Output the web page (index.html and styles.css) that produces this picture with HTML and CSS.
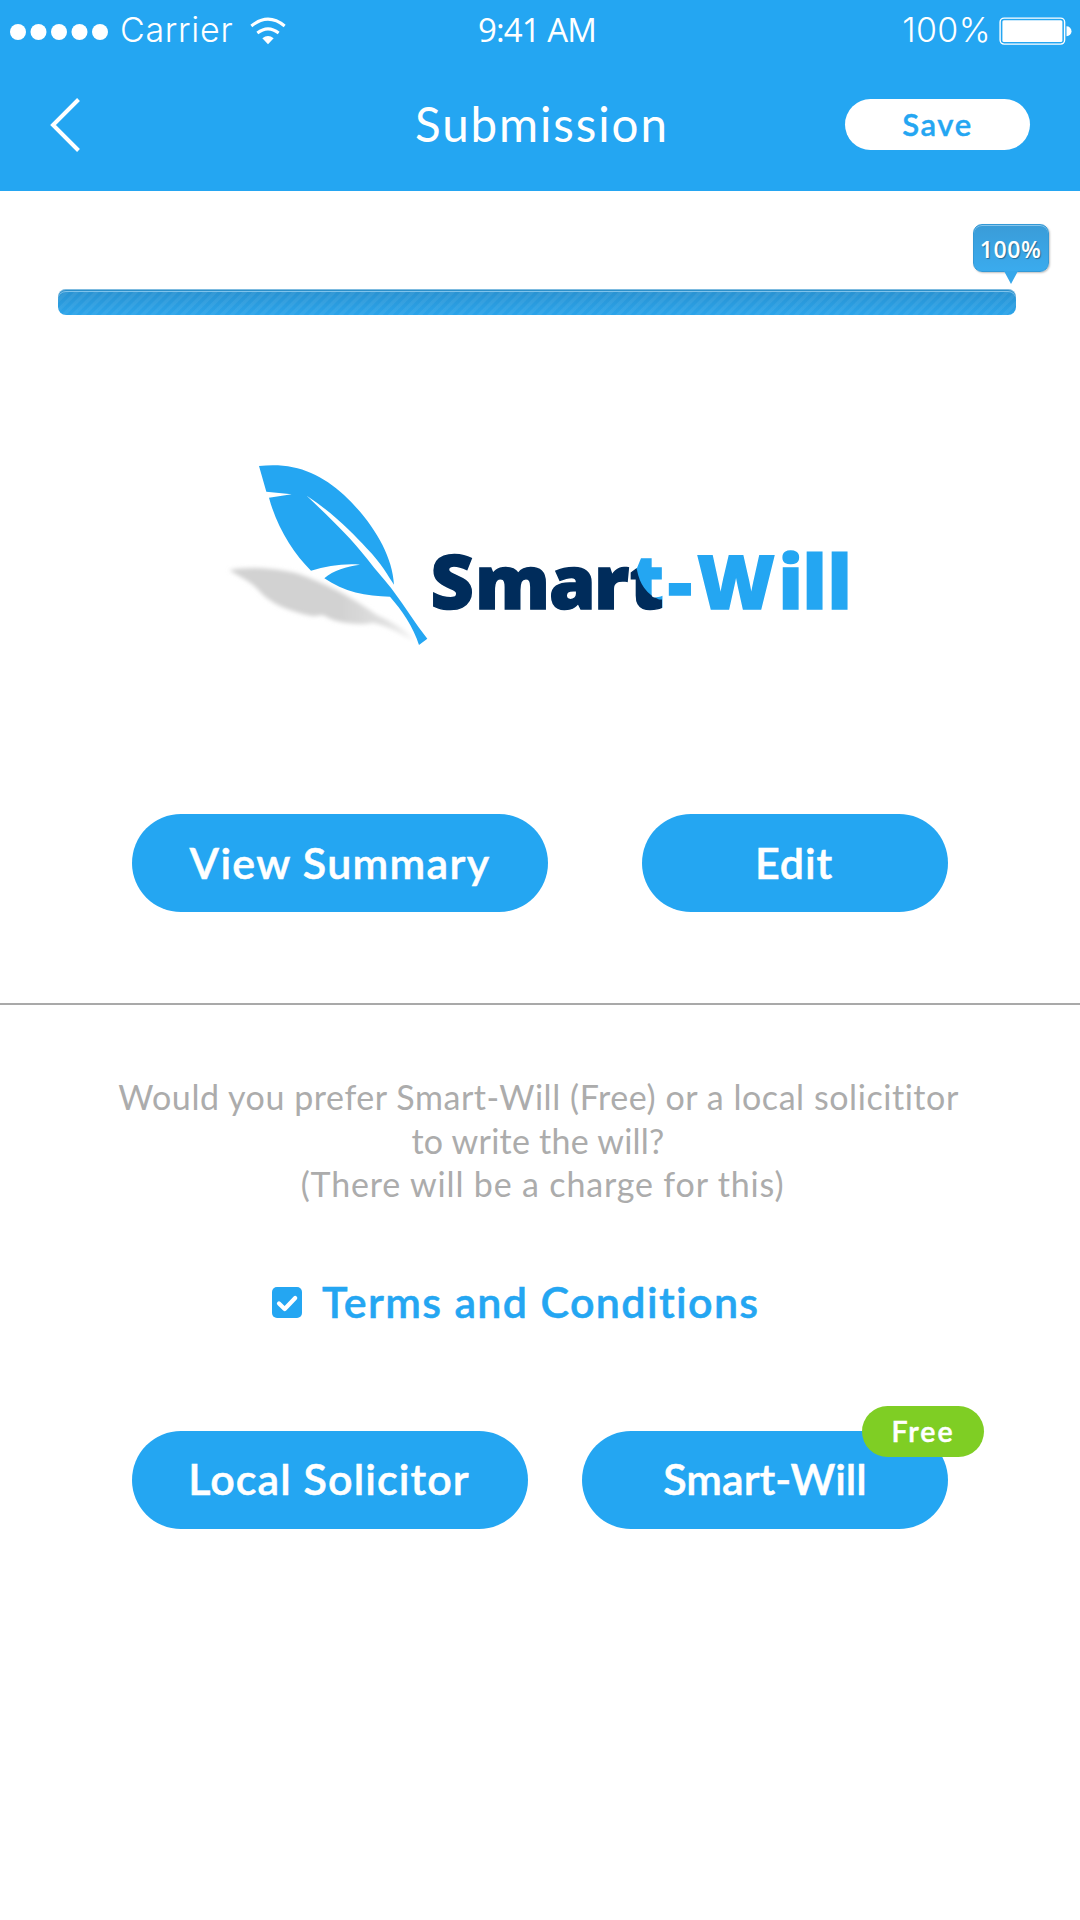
FILE: index.html
```html
<!DOCTYPE html>
<html lang="en">
<head>
<meta charset="utf-8">
<title>Submission</title>
<link rel="stylesheet" href="styles.css">
</head>
<body>
<header class="header">
  <div class="status">
    <div class="status-left">
      <svg class="signal" width="98" height="16" viewBox="0 0 98 16" fill="#fff"><circle cx="8" cy="8" r="8"/><circle cx="28.5" cy="8" r="8"/><circle cx="49" cy="8" r="8"/><circle cx="69.5" cy="8" r="8"/><circle cx="90" cy="8" r="8"/></svg>
      <span class="carrier">Carrier</span>
      <svg class="wifi" width="36" height="28" viewBox="750 48 108 84" fill="none" stroke="#fff" stroke-width="9"><path d="M754 75Q804 34 854 75M772 96Q804 71 836 96"/><path d="M787 112Q804 98 821 112L804 129.500z" fill="#fff" stroke="none"/></svg>
    </div>
    <span class="time">9:41 AM</span>
    <div class="status-right">
      <span class="battery-label">100%</span>
      <svg class="battery" width="73" height="29" viewBox="0 0 73 29"><rect x="1.100" y="1.100" width="64.500" height="26" rx="4" fill="none" stroke="#fff" stroke-width="1.400"/><rect x="3.400" y="3.300" width="60" height="21.800" rx="1.500" fill="#fff"/><path d="M67.500 9.200a5 5 0 0 1 0 10z" fill="#fff"/></svg>
    </div>
  </div>
  <nav class="nav">
    <svg class="back" width="32" height="56" viewBox="0 0 32 56" fill="none" stroke="#fff" stroke-width="4"><path d="M28.500 2.500L3 28l25.500 25.500"/></svg>
    <h1 class="title">Submission</h1>
    <button class="save">Save</button>
  </nav>
</header>
<main>
  <section class="progress">
    <div class="track"><div class="bubble">100%<svg class="tip" width="14" height="13" viewBox="0 0 14 13"><path d="M0 0h14L7 13z" fill="#36a7ea"/></svg></div></div>
  </section>
  <section class="brand">
    <svg width="660" height="220" viewBox="210 440 660 220">
      <defs>
        <filter id="soft" x="-10%" y="-20%" width="120%" height="140%"><feGaussianBlur stdDeviation="7"/></filter>
        <linearGradient id="fade"><stop offset=".6" stop-color="#d2d2d2"/><stop offset=".85" stop-color="#e0e0e0"/><stop offset="1" stop-color="#f4f4f4"/></linearGradient>
        <pattern id="ink" patternUnits="userSpaceOnUse" x="410" y="520" width="460" height="140">
          <path d="M0 0h460v140H0z" fill="#24a6f2"/>
          <path d="M0 0h221v38Q226 46 227 50Q231 72 249 79.500H252V140H0z" fill="#002c5b"/>
        </pattern>
      </defs>
      <g transform="translate(210 440) scale(.33333)">
        <path d="M58 390C100 380 190 382 260 400C350 430 430 475 500 525C550 548 590 570 612 602C570 582 540 560 490 548C450 556 380 552 340 526C325 524 318 530 305 528C240 515 180 490 150 455C125 425 90 412 58 390z" fill="url(#fade)" filter="url(#soft)"/>
        <path d="M147 78C250 66 330 98 402 165C482 240 547 340 552 434C535 410 515 370 470 325C430 280 370 220 290 167C350 225 420 290 470 355C500 395 530 425 552 456C585 500 615 550 652 596L627 615C610 560 575 510 540 470C470 470 400 455 343 415C370 390 410 380 450 374C400 370 350 378 303 392C250 340 200 260 177 173L245 163L169 155z" fill="#24a6f2"/>
      </g>
      <text class="wordmark" y="608.500" x="430.500 475 549 594 629.500 668 697 778.500 802.500 827.500" fill="url(#ink)" stroke="url(#ink)">Smart-Will</text>
    </svg>
  </section>
  <section class="actions">
    <button class="pill view">View Summary</button>
    <button class="pill edit">Edit</button>
  </section>
  <section class="choice">
    <p class="question"><span class="q1">Would you prefer Smart-Will (Free) or a local solicititor</span><span class="q2">to write the will?</span><span class="q3">(There will be a charge for this)</span></p>
    <label class="terms">
      <svg width="30" height="31" viewBox="0 0 30 31"><rect width="30" height="31" rx="5" fill="#24a6f2"/><path d="M7 16.500l5.700 5.500L23.200 11" fill="none" stroke="#fff" stroke-width="4.200" stroke-linecap="round" stroke-linejoin="round"/></svg>
      <span>Terms and Conditions</span>
    </label>
    <div class="providers">
      <button class="pill local">Local Solicitor</button>
      <button class="pill smart">Smart-Will<span class="badge">Free</span></button>
    </div>
  </section>
</main>
</body>
</html>
```
FILE: styles.css
```css
* { box-sizing: border-box; }
body {
  margin: 0;
  width: 1080px;
  min-height: 1920px;
  background: #fff;
  font-family: Lato, "Open Sans", sans-serif;
  font-variant-ligatures: none;
  white-space: nowrap;
}
button { border: 0; padding: 0; font: inherit; color: inherit; }

.header { height: 191px; background: #24a6f2; color: #fff; }
.status {
  display: grid;
  grid-template-columns: 478px 1fr auto;
  height: 58px;
  padding-right: 8px;
  line-height: 59px;
}
.status-left, .status-right { display: flex; align-items: center; }
.status-left { padding-left: 10px; }
.signal { margin-top: 3px; }
.carrier { margin-left: 12px; width: 128px; font: 350 34px/58px Inter, sans-serif; letter-spacing: .7px; }
.wifi { margin-left: 2px; margin-top: 1px; }
.time { font: 400 33px/60px "Open Sans", sans-serif; letter-spacing: -.9px; }
.battery-label { margin-right: 8px; font: 350 34px/60px Inter, sans-serif; letter-spacing: .4px; }
.battery { margin-top: 3px; }

.nav {
  display: grid;
  grid-template-columns: 365px 1fr 185px;
  align-items: center;
  height: 133px;
  padding: 0 50px;
}
.title { margin: 0 0 2px; font-size: 47.500px; font-weight: 400; line-height: 54px; letter-spacing: 1.9px; }
.save {
  height: 51px;
  padding-bottom: 2px;
  border-radius: 26px;
  background: #fff;
  color: #24a6f2;
  font-size: 31px;
  font-weight: 600;
  letter-spacing: 1.6px;
  -webkit-text-stroke: .4px;
}

.progress { padding: 98px 64px 0 58px; }
.track {
  position: relative;
  height: 26px;
  border-radius: 8px;
  background:
    repeating-linear-gradient(135deg, rgba(255,255,255,.06) 0 2.500px, transparent 3.500px 6px, rgba(255,255,255,.06) 7px),
    linear-gradient(#2890cf, #2ba4ea);
  box-shadow: inset 0 1px #7dbbe0, inset 0 2px #2c8fca, inset 0 3px #7fc3eb;
}
.bubble {
  position: absolute;
  right: -33px;
  top: -65px;
  width: 76px;
  height: 48px;
  border: 1px solid #3399d6;
  border-radius: 9px;
  background: linear-gradient(#3a9cd8, #3aabee);
  box-shadow: inset 0 1px #86c5eb, 1px 1px 2px rgba(0,0,0,.25);
  color: #fff;
  font: 600 23px/48px "Open Sans", sans-serif;
  letter-spacing: .6px;
  padding-right: 1px;
  text-align: center;
  text-shadow: 1px 1px 1px rgba(0,0,0,.35);
}
.tip { position: absolute; left: 30px; top: 46px; }

.brand { padding: 125px 0 0 210px; height: 499px; }
.brand svg { display: block; }
.wordmark { font: 800 75px "Open Sans", "Noto Sans", sans-serif; stroke-width: 1.500px; }

.actions {
  display: flex;
  justify-content: space-between;
  height: 191px;
  padding: 0 132px;
  border-bottom: 2px solid #a9a9a9;
}
.pill {
  position: relative;
  height: 98px;
  padding-bottom: 2px;
  border-radius: 49px;
  background: #24a6f2;
  color: #fff;
  font-size: 43px;
  font-weight: 600;
  -webkit-text-stroke: .5px;
}
.view { width: 416px; letter-spacing: 1.3px; }
.edit { width: 306px; padding-right: 2px; letter-spacing: .9px; }

.choice { padding-top: 70px; }
.question {
  display: flex;
  flex-direction: column;
  align-items: center;
  margin: 0;
  color: #acacac;
  font-size: 34px;
  line-height: 43.500px;
}
.q1 { letter-spacing: .56px; padding-right: 3px; }
.q2 { letter-spacing: .25px; padding-right: 4px; }
.q3 { letter-spacing: .84px; padding-left: 5px; }
.terms {
  display: flex;
  align-items: center;
  gap: 20px;
  margin-top: 69px;
  padding-left: 272px;
  color: #24a6f2;
  font-size: 43px;
  font-weight: 600;
  line-height: 56px;
  letter-spacing: 1.35px;
  -webkit-text-stroke: .5px;
}
.terms span { margin-top: -1px; }
.providers { display: flex; justify-content: space-between; padding: 101px 132px 0; }
.local { width: 396px; padding-right: 2px; letter-spacing: 1.1px; }
.smart { width: 366px; letter-spacing: 0; }
.badge {
  position: absolute;
  right: -36px;
  top: -25px;
  width: 122px;
  height: 51px;
  border-radius: 26px;
  background: #7fce24;
  font-size: 28.500px;
  line-height: 51px;
  letter-spacing: 2px;
}
```
